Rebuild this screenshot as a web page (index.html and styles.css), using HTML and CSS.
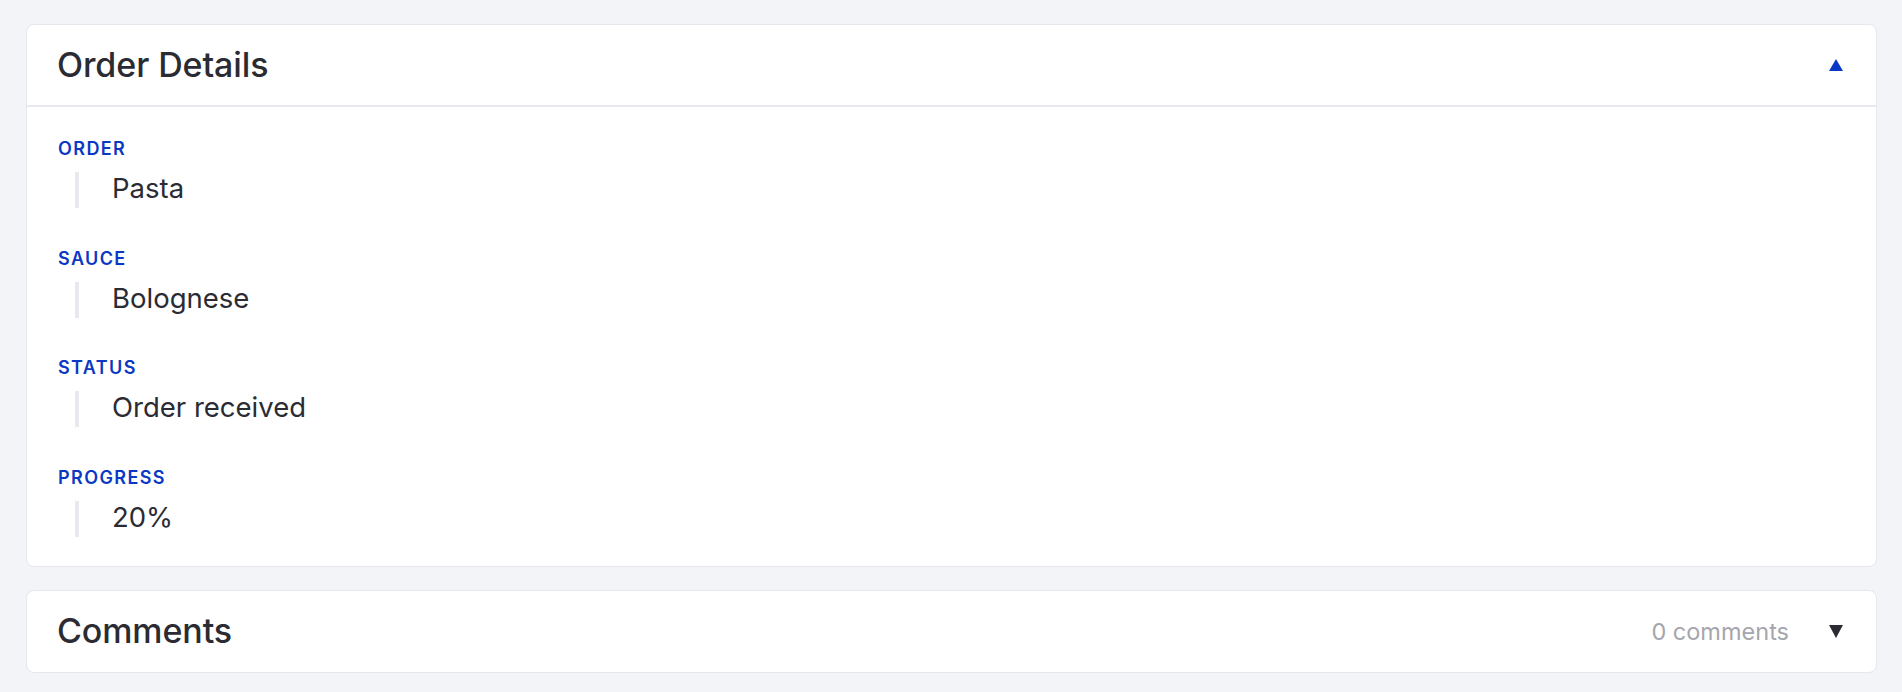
FILE: index.html
```html
<!DOCTYPE html>
<html lang="en">
<head>
<meta charset="utf-8">
<title>Order Details</title>
<link rel="stylesheet" href="styles.css">
</head>
<body>
<main class="page">
  <section class="card">
    <header class="card-header card-header--open">
      <h2 class="card-title">Order Details</h2>
      <span class="caret caret--up" aria-hidden="true"></span>
    </header>
    <dl class="fields">
      <div class="field">
        <dt class="field-label">Order</dt>
        <dd class="field-value">Pasta</dd>
      </div>
      <div class="field">
        <dt class="field-label">Sauce</dt>
        <dd class="field-value">Bolognese</dd>
      </div>
      <div class="field">
        <dt class="field-label">Status</dt>
        <dd class="field-value">Order received</dd>
      </div>
      <div class="field">
        <dt class="field-label">Progress</dt>
        <dd class="field-value">20%</dd>
      </div>
    </dl>
  </section>
  <section class="card">
    <header class="card-header">
      <h2 class="card-title">Comments</h2>
      <div class="card-meta">
        <span class="meta-count">0 comments</span>
        <span class="caret caret--down" aria-hidden="true"></span>
      </div>
    </header>
  </section>
</main>
</body>
</html>
```

FILE: styles.css
```css
* { box-sizing: border-box; }

html, body {
  margin: 0;
  padding: 0;
  background: #f3f4f8;
}

body {
  font-family: Inter, "Noto Sans", sans-serif;
  color: #2b2b33;
}

.page {
  display: flex;
  flex-direction: column;
  gap: 23px;
  padding: 24px 25px 24px 26px;
}

.card {
  background: #ffffff;
  border: 1px solid #e6e7ec;
  border-radius: 8px;
}

.card-header {
  height: 81px;
  display: flex;
  align-items: center;
  justify-content: space-between;
  padding: 0 33px 0 30px;
}

.card-header--open {
  height: 82px;
  border-bottom: 2px solid #e8e9ee;
}

.card-title {
  margin: 0;
  font-size: 34px;
  font-weight: 500;
  letter-spacing: -0.1px;
  line-height: 40px;
  color: #2b2b33;
}

.card-meta {
  display: flex;
  align-items: center;
  gap: 40px;
}

.meta-count {
  font-size: 23.5px;
  color: #a5a6ad;
  font-weight: 400;
}

.caret {
  width: 0;
  height: 0;
  border-left: 7px solid transparent;
  border-right: 7px solid transparent;
}

.caret--up {
  border-bottom: 12px solid #0a38c4;
}

.caret--down {
  border-top: 13px solid #2b2b33;
}

.fields {
  margin: 0;
  padding: 31px 30px 29px 31px;
  display: flex;
  flex-direction: column;
  gap: 39.5px;
}

.field {
  display: flex;
  flex-direction: column;
  gap: 12px;
}

.field-label {
  font-size: 18px;
  line-height: 22px;
  font-weight: 600;
  letter-spacing: 1.4px;
  text-transform: uppercase;
  color: #0a38c4;
}

.field-value {
  margin: 0 0 0 17px;
  height: 36px;
  display: flex;
  align-items: center;
  border-left: 4px solid #e8e9ee;
  padding-left: 33px;
  padding-bottom: 4px;
  font-size: 27.5px;
  line-height: 36px;
  color: #2b2b33;
}
```
